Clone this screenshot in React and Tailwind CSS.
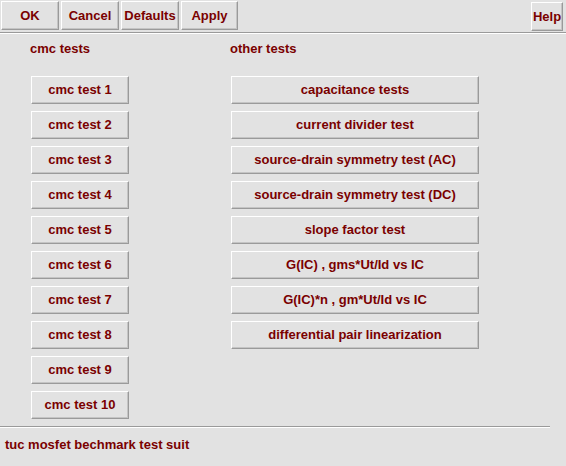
const FONT = { fontFamily: '"Liberation Sans", Arial, sans-serif' };

const cmcTests = Array.from({ length: 10 }, (_, i) => `cmc test ${i + 1}`);

const otherTests = [
  'capacitance tests',
  'current divider test',
  'source-drain symmetry test (AC)',
  'source-drain symmetry test (DC)',
  'slope factor test',
  'G(IC) , gms*Ut/Id vs IC',
  'G(IC)*n , gm*Ut/Id vs IC',
  'differential pair linearization',
];

// tk style raised button
const TkButton = ({ children, className = '' }) => (
  <button
    type="button"
    className={`flex items-center justify-center bg-[#e2e2e2] border border-t-white border-l-white border-r-[#9a9a9a] border-b-[#9a9a9a] shadow-[inset_-1px_-1px_0_#c4c4c4] text-[13px] font-bold text-[#7a0000] leading-none ${className}`}
  >
    {children}
  </button>
);

export default function App() {
  return (
    <div className="w-[566px] h-[466px] bg-[#e2e2e2] text-[#7a0000] overflow-hidden" style={FONT}>
      {/* toolbar */}
      <div className="h-[33px] flex items-start pt-[1px] border-b border-b-[#9a9a9a] shadow-[0_1px_0_#ffffff]">
        <div className="flex gap-[2px] pl-[1px]">
          <TkButton className="w-[58px] h-[29px]">OK</TkButton>
          <TkButton className="w-[58px] h-[29px]">Cancel</TkButton>
          <TkButton className="w-[58px] h-[29px]">Defaults</TkButton>
          <TkButton className="w-[57px] h-[29px]">Apply</TkButton>
        </div>
        <TkButton className="ml-auto mr-[3px] mt-[1px] w-[32px] h-[29px]">Help</TkButton>
      </div>

      {/* body */}
      <div className="h-[393px] flex gap-[102px] pl-[31px] pt-[9px]">
        <div className="flex flex-col w-[98px]">
          <div className="h-[14px] leading-[14px] text-[13px] font-bold -ml-[1px]">cmc tests</div>
          <div className="mt-[20px] flex flex-col gap-[7px]">
            {cmcTests.map((t) => (
              <TkButton key={t} className="w-[98px] h-[28px] pb-[2px]">{t}</TkButton>
            ))}
          </div>
        </div>
        <div className="flex flex-col w-[248px]">
          <div className="h-[14px] leading-[14px] text-[13px] font-bold -ml-[1px]">other tests</div>
          <div className="mt-[20px] flex flex-col gap-[7px]">
            {otherTests.map((t) => (
              <TkButton key={t} className="w-[248px] h-[28px] pb-[2px]">{t}</TkButton>
            ))}
          </div>
        </div>
      </div>

      {/* status */}
      <div className="w-[550px] border-t border-t-[#9a9a9a] shadow-[0_1px_0_#ffffff]" />
      <div className="pl-[5px] pt-[11px] h-[14px] leading-[14px] text-[13px] font-bold">tuc mosfet bechmark test suit</div>
    </div>
  );
}
